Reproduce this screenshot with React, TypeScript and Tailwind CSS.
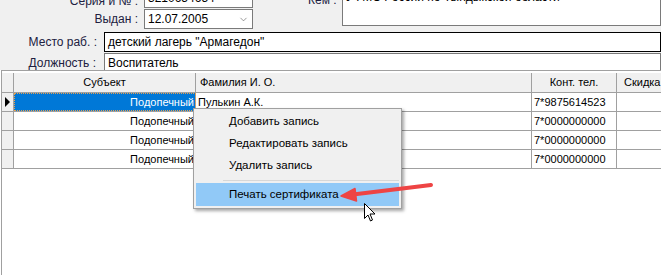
import { ChevronDown } from 'lucide-react';

const rows = [
    { subj: 'Подопечный', fio: 'Пулькин А.К.', tel: '7*9875614523' },
    { subj: 'Подопечный', fio: '', tel: '7*0000000000' },
    { subj: 'Подопечный', fio: '', tel: '7*0000000000' },
    { subj: 'Подопечный', fio: '', tel: '7*0000000000' },
];

export default function App() {
    return (
        <div className="relative w-[661px] h-[275px] overflow-hidden bg-white font-['Liberation_Sans',Arial,sans-serif] text-[12px] text-black">
            {/* Form */}
            <div className="h-[70px] bg-[#f0f0f0] overflow-hidden">
                <div className="flex -mt-[12px]">
                    <div className="flex flex-col gap-[1px]">
                        <div className="flex items-center">
                            <span className="w-[139px] pr-[1px] text-right text-[#202040] leading-none pt-[6px]">Серия и № :</span>
                            <div className="ml-[5px] w-[109px] h-[20px] bg-white border border-[#7a7a7a] px-[3px] leading-[18px]">3210654654</div>
                        </div>
                        <div className="flex items-center">
                            <span className="w-[139px] pr-[1px] text-right text-[#202040]">Выдан :</span>
                            <div className="ml-[5px] w-[109px] h-[20px] bg-white border border-[#7a7a7a] pl-[3px] pr-[3px] flex items-center justify-between">
                                <span>12.07.2005</span>
                                <ChevronDown className="w-[11px] h-[11px] text-[#505050]" strokeWidth={1.25} />
                            </div>
                        </div>
                    </div>
                    <span className="ml-[55px] w-[30px] text-[#202040] pt-[6px] leading-none">Кем :</span>
                    <div className="ml-[4px] flex-1 h-[38px] bg-white border border-[#7a7a7a] px-[3px] leading-none pt-[2px]">УФМС России по Тындыкской области</div>
                </div>
                <div className="flex items-center mt-[3px]">
                    <span className="w-[98px] text-right text-[#202040] pr-[1px]">Место раб. :</span>
                    <div className="ml-[6px] flex-1 h-[20px] bg-white border border-black px-[3px] leading-[18px]">детский лагерь "Армагедон"</div>
                </div>
                <div className="flex items-center mt-[1px]">
                    <span className="w-[97px] text-right text-[#202040] pr-[1px]">Должность :</span>
                    <div className="ml-[7px] flex-1 h-[20px] bg-white border border-[#7a7a7a] px-[3px] leading-[18px]">Воспитатель</div>
                </div>
            </div>

            {/* Grid */}
            <div className="ml-[1px] h-[205px] border-l border-t border-[#a0a0a0] bg-white text-[11px]">
                <div className="flex h-[22px] border-b border-[#a0a0a0] bg-[#f0f0f0] border-t-2 border-t-white">
                    <div className="w-[12px] shrink-0 border-r border-[#a0a0a0]" />
                    <div className="w-[182px] shrink-0 border-r border-[#a0a0a0] flex items-center justify-center">Субъект</div>
                    <div className="w-[336px] shrink-0 border-r border-[#a0a0a0] flex items-center pl-[4px]">Фамилия И. О.</div>
                    <div className="w-[85px] shrink-0 border-r border-[#a0a0a0] flex items-center justify-center">Конт. тел.</div>
                    <div className="w-[100px] shrink-0 flex items-center pl-[7px]">Скидка</div>
                </div>
                {rows.map((r, i) => (
                    <div key={i} className="flex h-[19px] border-b border-[#a0a0a0]">
                        <div className="w-[12px] shrink-0 border-r border-[#a0a0a0] bg-[#f0f0f0] flex items-center pl-[3px]">
                            {i === 0 && (
                                <svg width="5" height="10" viewBox="0 0 5 10">
                                    <path d="M0 0 L5 5 L0 10 Z" fill="#000" />
                                </svg>
                            )}
                        </div>
                        <div className={`w-[182px] shrink-0 border-r border-[#a0a0a0] flex items-center justify-end pr-[1px] ${i === 0 ? 'bg-[#0078d7] text-white outline-1 outline-dotted outline-[#e8a050] -outline-offset-1' : ''}`}>
                            {r.subj}
                        </div>
                        <div className="w-[336px] shrink-0 border-r border-[#a0a0a0] flex items-center pl-[2px]">{r.fio}</div>
                        <div className="w-[85px] shrink-0 border-r border-[#a0a0a0] flex items-center pl-[2px]">{r.tel}</div>
                        <div className="w-[100px] shrink-0" />
                    </div>
                ))}
            </div>

            {/* Context menu */}
            <div className="absolute left-[193px] top-[108px] w-[209px] bg-[#f0f0f0] border border-[#a0a0a0] p-[2px] shadow-[2px_2px_3px_rgba(0,0,0,0.35)] text-[11.5px] text-black">
                <div className="h-[22px] flex items-center pl-[33px]">Добавить запись</div>
                <div className="h-[22px] flex items-center pl-[33px]">Редактировать запись</div>
                <div className="h-[22px] flex items-center pl-[33px]">Удалить запись</div>
                <div className="h-[6px] flex items-center pl-[27px]">
                    <div className="w-full h-[1px] bg-[#d7d7d7]" />
                </div>
                <div className="h-[23px] flex items-center pl-[33px] bg-[#91c9f7]">Печать сертификата</div>
            </div>

            {/* Annotation arrow */}
            <svg className="absolute left-0 top-0" width="661" height="275" viewBox="0 0 661 275">
                <line x1="431" y1="185" x2="353" y2="194.5" stroke="#ee4444" strokeWidth="4" strokeLinecap="round" />
                <path d="M341 196 L355 188.5 L356.5 201 Z" fill="#ee4444" stroke="#ee4444" strokeWidth="1.5" strokeLinejoin="round" />
            </svg>

            {/* Mouse cursor */}
            <svg className="absolute left-[364px] top-[203px]" width="12" height="19" viewBox="0 0 12 19">
                <path d="M0.5 0.5 L0.5 15.5 L4 12 L6.5 18 L8.5 17 L6 11 L11 11 Z" fill="#fff" stroke="#000" strokeWidth="1" strokeLinejoin="round" />
            </svg>
        </div>
    );
}
